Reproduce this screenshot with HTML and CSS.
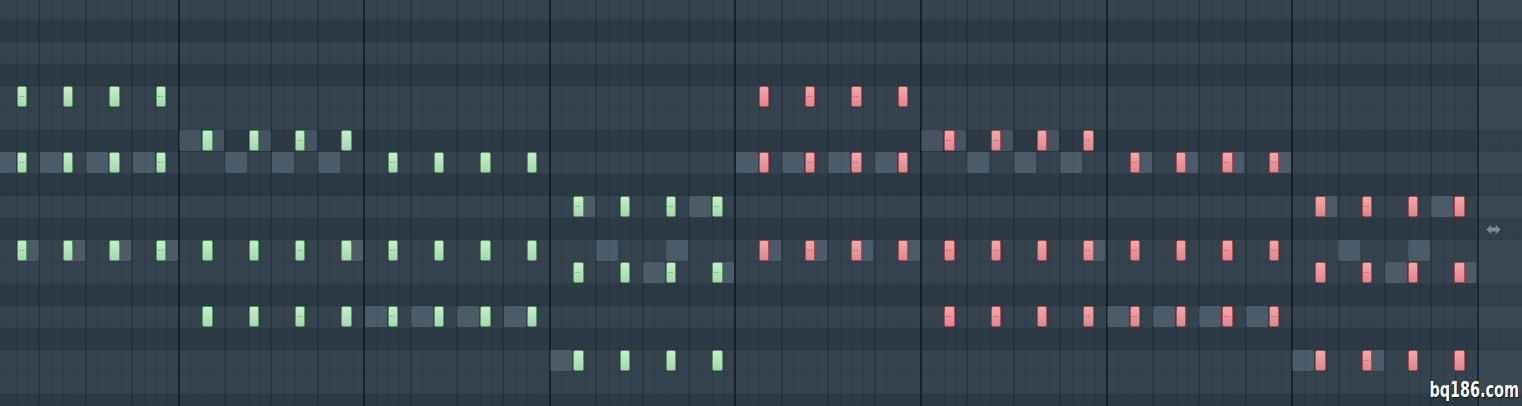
FILE: index.html
```html
<!DOCTYPE html>
<html lang="en">
<head>
    <meta charset="UTF-8">
    <title>Piano Roll</title>
    <link rel="stylesheet" href="styles.css">
</head>
<body>
    <!-- Piano roll: lanes, ghost notes and notes are built from the pattern below -->
    <div class="roll" id="roll">
        <div class="outside"></div>
        <svg class="resize" viewBox="0 0 15 11" width="15" height="11">
            <path d="M0.5 5.5 L5 1 V3.5 H10 V1 L14.5 5.5 L10 10 V7.5 H5 V10 Z" fill="#7a8a97" stroke="#5d6c78" stroke-width="0.6"/>
        </svg>
    </div>

    <div class="watermark">bq186.com</div>

    <script>
        // notes sit on steps 2, 6, 10 and 14 of every bar
        var STEPS = [2, 6, 10, 14];
        var BLACK = [1, 3, 6, 8, 10];

        // [lane, hasNotes, ghost steps, marked steps]
        var bars = [
            { color: 'green', rows: [[4, true, [], [2, 14]], [7, true, [0, 4, 8, 12], [2, 14]], [11, true, [2, 6, 10, 14], [2, 14]]] },
            { color: 'green', rows: [[6, true, [0, 2, 6, 10], [10]], [7, false, [4, 8, 12], []], [11, true, [14], [10]], [14, true, [], [10]]] },
            { color: 'green', rows: [[7, true, [], [2]], [11, true, [], [2]], [14, true, [0, 4, 8, 12], [2]]] },
            { color: 'green', rows: [[9, true, [2, 12], [2, 10, 14]], [11, false, [4, 10], []], [12, true, [8, 14], [2, 10, 14]], [16, true, [0], []]] },
            { color: 'red', rows: [[4, true, [], [6, 10]], [7, true, [0, 4, 8, 12], [6, 10]], [11, true, [2, 6, 10, 14], [6, 10]]] },
            { color: 'red', rows: [[6, true, [0, 2, 6, 10], [2, 6, 14]], [7, false, [4, 8, 12], []], [11, true, [14], [2, 6, 14]], [14, true, [], [2, 6, 14]]] },
            { color: 'red', rows: [[7, true, [2, 6, 10, 14], [2, 10, 14]], [11, true, [], [2, 10, 14]], [14, true, [0, 4, 8, 12], [2, 10, 14]]] },
            { color: 'red', rows: [[9, true, [2, 12], [6]], [11, false, [4, 10], []], [12, true, [8, 14], [6]], [16, true, [0, 6], [6]]] }
        ];

        var roll = document.getElementById('roll');

        function place(el, row, col, span) {
            el.style.gridRow = row + 1;
            el.style.gridColumn = (col + 1) + ' / span ' + span;
            return el;
        }

        // lanes go first so everything else sits on top
        for (var r = 18; r >= 0; r--) {
            var lane = document.createElement('div');
            lane.className = 'lane' + (BLACK.indexOf(r % 12) > -1 ? ' black' : '');
            lane.style.gridRow = r + 1;
            roll.insertBefore(lane, roll.firstChild);
        }

        bars.forEach(function (bar, b) {
            bar.rows.forEach(function (row) {
                row[2].forEach(function (s) {
                    var g = document.createElement('div');
                    g.className = 'ghost';
                    roll.appendChild(place(g, row[0], b * 16 + s, 2));
                });
            });
        });

        bars.forEach(function (bar, b) {
            bar.rows.forEach(function (row) {
                if (!row[1]) return;
                STEPS.forEach(function (s) {
                    var n = document.createElement('div');
                    n.className = 'note ' + bar.color + (row[3].indexOf(s) > -1 ? ' marked' : '');
                    roll.appendChild(place(n, row[0], b * 16 + s, 1));
                });
            });
        });
    </script>
</body>
</html>
```

FILE: styles.css
```css
/* Reset and base */
* {
    margin: 0;
    padding: 0;
    box-sizing: border-box;
}

body {
    width: 1522px;
    height: 406px;
    overflow: hidden;
    position: relative;
    background: #2f3d48;
    font-family: 'Liberation Sans', sans-serif;
}

/* The grid: 132 steps of 11.6px, 19 key lanes of 22px */
.roll {
    display: grid;
    grid-template-columns: repeat(132, 11.6px);
    grid-template-rows: repeat(19, 22px);
    width: 1531.2px;
    margin: -2px 0 0 -7.1px;
}

.lane {
    grid-column: 1 / -1;
    background-color: #34434e;
    background-image:
        repeating-linear-gradient(to right, rgba(8, 14, 20, 0.55) 0 2px, transparent 2px 185.6px),
        repeating-linear-gradient(to right, rgba(10, 18, 26, 0.28) 0 1px, transparent 1px 46.4px),
        repeating-linear-gradient(to right, rgba(10, 18, 26, 0.14) 0 1px, transparent 1px 11.6px);
    background-position: -1px 0, -0.5px 0, 0 0;
    box-shadow: inset 0 -1px rgba(0, 0, 0, 0.06);
}

.lane.black {
    background-color: #2c3a45;
}

/* area past the end of the pattern */
.outside {
    grid-column: 129 / -1;
    grid-row: 1 / -1;
    background: rgba(255, 255, 255, 0.03);
}

.resize {
    grid-row: 11;
    grid-column: 129 / span 3;
    align-self: center;
    margin-left: 9px;
    display: block;
}

/* notes from other patterns */
.ghost {
    margin: 0 0.6px 1px;
    border-radius: 2px;
    background: rgba(185, 205, 220, 0.18);
}

.note {
    position: relative;
    margin: 0 0.6px 1px;
    border: 1px solid;
    border-radius: 2px;
}

.note.green {
    color: #7fb487;
    border-color: #5d9465;
    background: linear-gradient(#c6efc8, #a3d9aa);
}

.note.red {
    color: #c7676e;
    border-color: #a94b54;
    background: linear-gradient(#f5a7aa, #e3858a);
}

/* little velocity mark */
.note.marked::after {
    content: "";
    position: absolute;
    left: 1px;
    top: 9px;
    width: 5px;
    height: 1px;
    background: repeating-linear-gradient(to right, currentColor 0 2px, transparent 2px 3px);
}

.watermark {
    position: absolute;
    right: 3px;
    bottom: 5px;
    color: #fff;
    font-family: 'Liberation Sans Narrow', 'DejaVu Sans Condensed', sans-serif;
    font-weight: 700;
    font-size: 16px;
    line-height: 1;
    transform: scaleY(1.3);
    transform-origin: bottom right;
    text-shadow: 1px 1px 0 #111, -1px 0 0 #222;
}
```
